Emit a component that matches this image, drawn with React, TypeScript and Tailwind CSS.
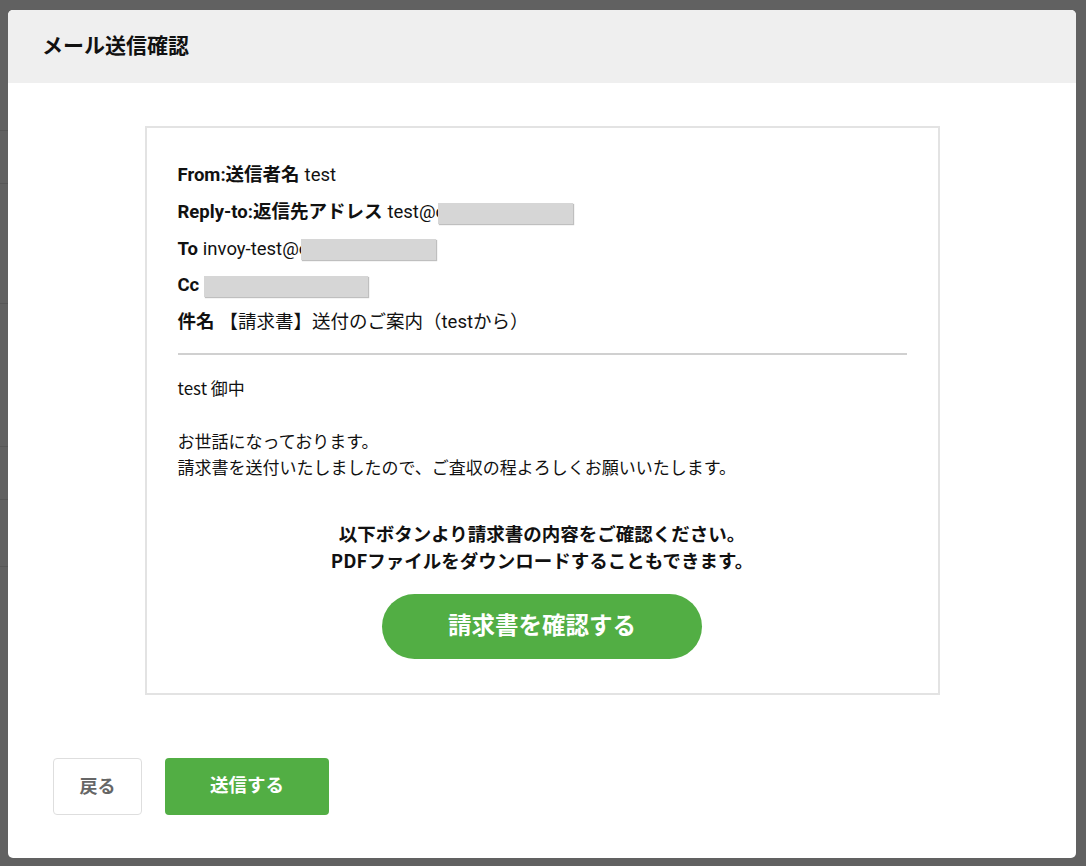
import React from "react";

const jp = "font-['Roboto','Noto_Sans_CJK_JP',sans-serif]";

function Redacted({ w }: { w: number }) {
  // grey block hiding the address, drawn over the tail of the text
  return (
    <span
      className="relative inline-block h-[21px] bg-[#d6d6d6] align-middle shadow-[1px_1px_1px_rgba(0,0,0,0.25)]"
      style={{ width: w }}
    />
  );
}

export default function App() {
  return (
    <div className={`relative h-[866px] w-full overflow-hidden bg-[#616161] ${jp}`}>
      {/* page behind the overlay */}
      <div className="absolute inset-0">
        <div className="absolute left-0 top-[130px] h-px w-[8px] bg-[#575757]" />
        <div className="absolute left-0 top-[183px] h-px w-[8px] bg-[#575757]" />
        <div className="absolute left-0 top-[303px] h-px w-[8px] bg-[#575757]" />
        <div className="absolute left-0 top-[446px] h-px w-[8px] bg-[#575757]" />
        <div className="absolute left-0 top-[499px] h-px w-[8px] bg-[#575757]" />
        <div className="absolute left-0 top-[566px] h-px w-[8px] bg-[#575757]" />
      </div>

      <div className="relative ml-[8px] mt-[10px] flex h-[848px] w-[1068px] flex-col overflow-hidden rounded-[5px] bg-white">
        {/* Header */}
        <div className="flex h-[73px] items-center bg-[#efefef] px-[34px]">
          <h1 className="text-[21px] font-bold text-[#111]">メール送信確認</h1>
        </div>

        {/* Mail preview */}
        <div className="mt-[43px] flex justify-center">
          <div className="w-[795px] border-2 border-[#e3e3e3] px-[31px] pb-[34px] pt-[30px] text-[#111]">
            <div className="text-[18.5px]">
              <div className="flex h-[36.6px] items-center">
                <span className="font-bold">From:送信者名</span>
                <span className="ml-[5px]">test</span>
              </div>
              <div className="flex h-[36.6px] items-center">
                <span className="font-bold">Reply-to:返信先アドレス</span>
                <span className="ml-[5px]">test@c</span>
                <span className="-ml-[7px]"><Redacted w={135} /></span>
              </div>
              <div className="flex h-[36.6px] items-center">
                <span className="font-bold">To</span>
                <span className="ml-[5px]">invoy-test@c</span>
                <span className="-ml-[7px]"><Redacted w={135} /></span>
              </div>
              <div className="flex h-[36.6px] items-center">
                <span className="font-bold">Cc</span>
                <span className="ml-[5px]"><Redacted w={164} /></span>
              </div>
              <div className="flex h-[36.6px] items-center">
                <span className="font-bold">件名</span>
                <span className="ml-[5px]">【請求書】送付のご案内（testから）</span>
              </div>
            </div>

            <div className="mt-[12px] h-[2px] bg-[#d0d0d0]" />

            <div className="mt-[20px] text-[17px] leading-[26.5px] font-['Noto_Sans_CJK_JP',sans-serif]">
              <p>test 御中</p>
              <p>&nbsp;</p>
              <p>お世話になっております。</p>
              <p>請求書を送付いたしましたので、ご査収の程よろしくお願いいたします。</p>
            </div>

            <div className="mt-[39px] text-center text-[18.5px] font-bold leading-[27px] font-['Noto_Sans_CJK_JP',sans-serif]">
              <p>以下ボタンより請求書の内容をご確認ください。</p>
              <p>PDFファイルをダウンロードすることもできます。</p>
            </div>

            <div className="mt-[20px] flex justify-center">
              <button className="flex h-[65px] w-[320px] items-center justify-center rounded-full bg-[#52ae44] text-[23.5px] font-bold text-white">
                請求書を確認する
              </button>
            </div>
          </div>
        </div>

        {/* Footer buttons */}
        <div className="mt-[63px] flex gap-[23px] px-[45px]">
          <button className="flex h-[57px] w-[89px] items-center justify-center rounded-[4px] border border-[#dedede] bg-white text-[18px] font-bold text-[#666]">
            戻る
          </button>
          <button className="flex h-[57px] w-[164px] items-center justify-center rounded-[4px] bg-[#52ae44] text-[18.5px] font-bold text-white">
            送信する
          </button>
        </div>
      </div>
    </div>
  );
}
